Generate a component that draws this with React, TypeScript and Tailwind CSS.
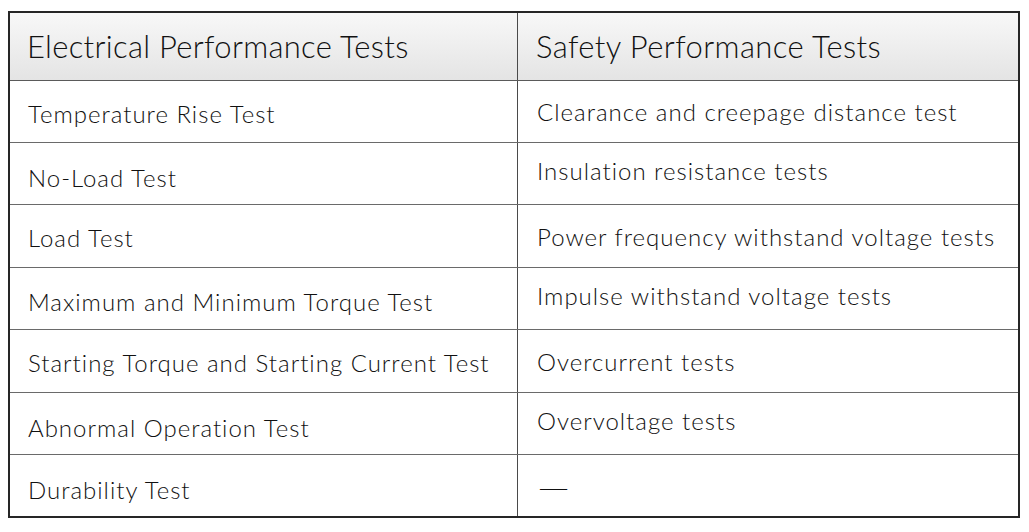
import React from "react";

const rows: { l: string; r: string; lo: string; ro: string; h: string }[] = [
  { l: "Temperature Rise Test", r: "Clearance and creepage distance test", lo: "translate-y-[2px]", ro: "translate-y-[0px]", h: "h-[62px]" },
  { l: "No-Load Test", r: "Insulation resistance tests", lo: "translate-y-[4px]", ro: "-translate-y-[3px]", h: "h-[62px]" },
  { l: "Load Test", r: "Power frequency withstand voltage tests", lo: "translate-y-[2px]", ro: "translate-y-[1px]", h: "h-[63px]" },
  { l: "Maximum and Minimum Torque Test", r: "Impulse withstand voltage tests", lo: "translate-y-[3px]", ro: "-translate-y-[3px]", h: "h-[62px]" },
  { l: "Starting Torque and Starting Current Test", r: "Overcurrent tests", lo: "translate-y-[2px]", ro: "translate-y-[1px]", h: "h-[63px]" },
  { l: "Abnormal Operation Test", r: "Overvoltage tests", lo: "translate-y-[4px]", ro: "-translate-y-[3px]", h: "h-[62px]" },
  { l: "Durability Test", r: "—", lo: "translate-y-[4px]", ro: "translate-y-[1px]", h: "h-[61px]" },
];

export default function App() {
  return (
    <div className="w-[1029px] h-[532px] bg-white pt-[11px] pl-[8px]" style={{ fontFamily: "Lato, 'Noto Sans', sans-serif" }}>
      <div className="w-[1012px] border-2 border-[#262626] flex flex-col text-[#111111]">
        <div className="h-[68px] shrink-0 flex bg-gradient-to-b from-[#f8f8f8] to-[#e4e4e4] border-b border-[#5a5a5a]">
          <div className="w-[508px] border-r border-[#4a4a4a] flex items-center pl-[17px] text-[31px] tracking-[0.3px] font-light">
            Electrical Performance Tests
          </div>
          <div className="flex-1 flex items-center pl-[18px] text-[31px] tracking-[0.4px] font-light">
            Safety Performance Tests
          </div>
        </div>
        {rows.map((row, i) => (
          <div
            key={i}
            className={`flex shrink-0 ${row.h} ${i < rows.length - 1 ? "border-b border-[#6a6a6a]" : ""}`}
          >
            <div className="w-[508px] border-r border-[#4a4a4a] flex items-center pl-[18px] text-[24px] tracking-[1px] font-light">
              <span className={row.lo}>{row.l}</span>
            </div>
            <div className="flex-1 flex items-center pl-[19px] text-[24px] tracking-[1px] font-light">
              {row.r === "—" ? (
                <span className={`${row.ro} inline-block origin-left scale-x-[1.75] tracking-normal`}>{row.r}</span>
              ) : (
                <span className={row.ro}>{row.r}</span>
              )}
            </div>
          </div>
        ))}
      </div>
    </div>
  );
}
